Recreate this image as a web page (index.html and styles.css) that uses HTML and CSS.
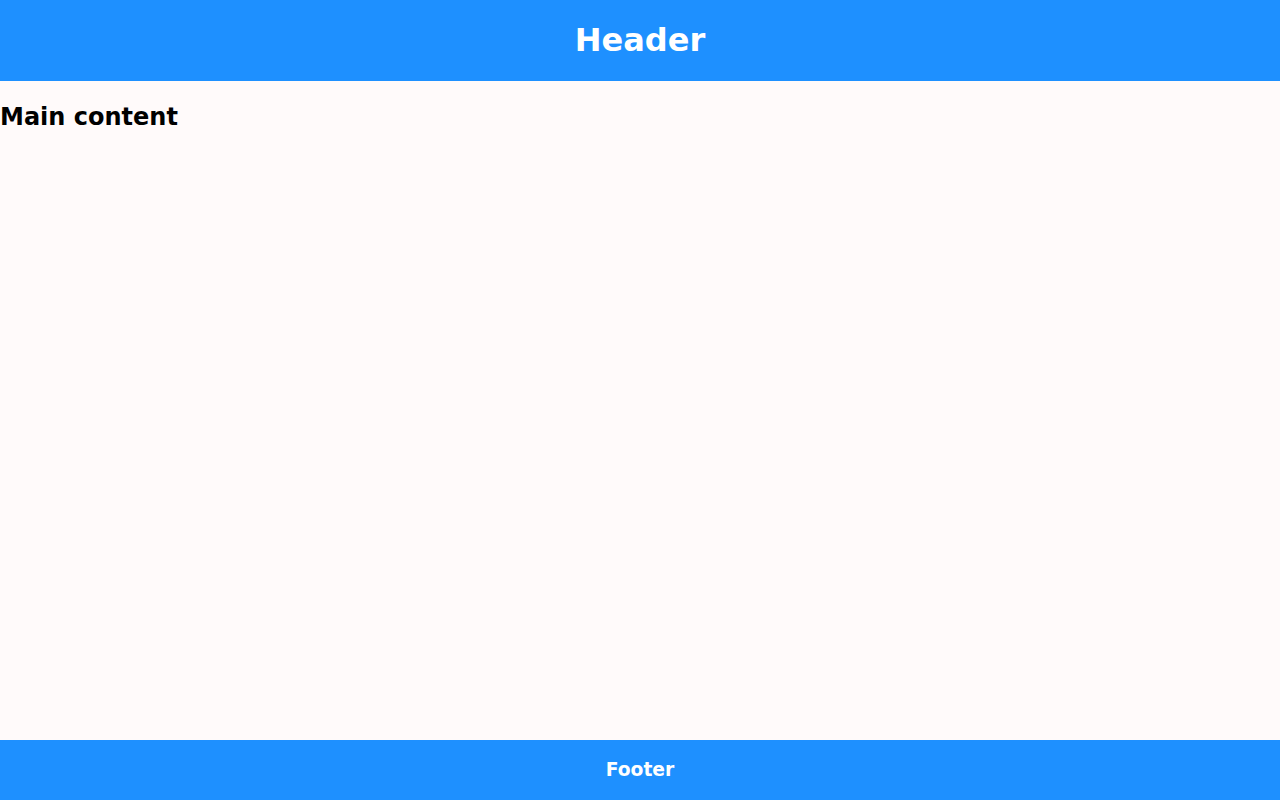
FILE: index.html
```html
<!DOCTYPE html>
<html lang="en">
<head>
<meta charset="utf-8">
<title>Layout</title>
<link rel="stylesheet" href="styles.css">
</head>
<body>
<div class="page">
  <header class="header"><h1 class="header-title">Header</h1></header>
  <main class="main"><h2 class="main-title">Main content</h2></main>
  <footer class="footer"><span class="footer-text">Footer</span></footer>
</div>
</body>
</html>
```

FILE: styles.css
```css
html, body {
  margin: 0;
  padding: 0;
  height: 100%;
}
body {
  background: #fffafa;
  font-family: "DejaVu Sans", sans-serif;
  color: #000;
}
.page {
  display: flex;
  flex-direction: column;
  height: 100vh;
}
.header {
  flex: 0 0 81px;
  box-sizing: border-box;
  padding-bottom: 2px;
  background: #1e90ff;
  display: flex;
  align-items: center;
  justify-content: center;
}
.header-title {
  margin: 0;
  font-size: 32px;
  font-weight: bold;
  color: #fff;
}
.main {
  flex: 1 1 auto;
}
.main-title {
  margin: 22px 0 20px;
  font-size: 24px;
  font-weight: bold;
}
.footer {
  flex: 0 0 60px;
  box-sizing: border-box;
  padding-bottom: 1px;
  background: #1e90ff;
  display: flex;
  align-items: center;
  justify-content: center;
}
.footer-text {
  font-size: 18.72px;
  font-weight: bold;
  color: #fff;
}
```
